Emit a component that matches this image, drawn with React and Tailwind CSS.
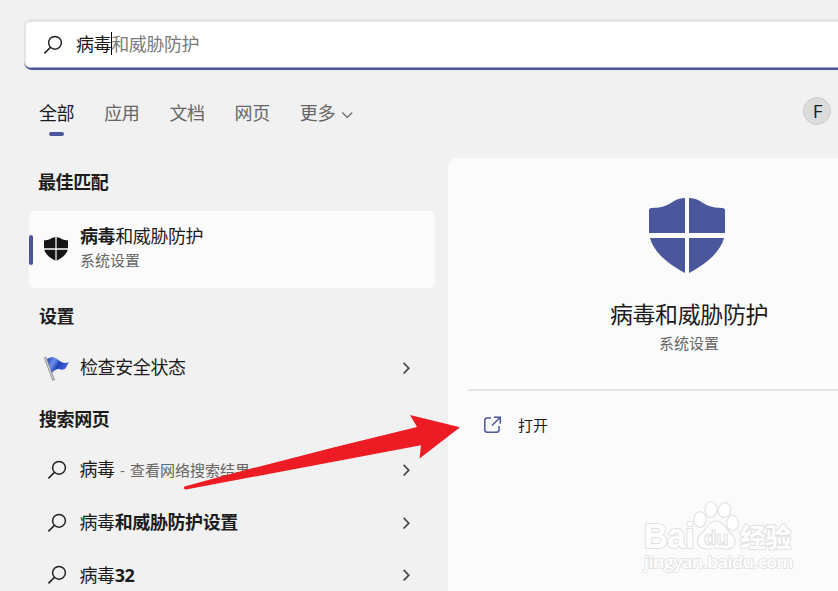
const tabs = ['应用', '文档', '网页'];

const webResults = [
  { query: '病毒', hint: ' - 查看网络搜索结果' },
  { query: '病毒', rest: '和威胁防护设置' },
  { query: '病毒', rest: '32' },
];

function SearchIcon() {
  return (
    <svg className="w-5 h-5 shrink-0" viewBox="0 0 20 20" fill="none" stroke="#222" strokeWidth="1.5">
      <circle cx="12" cy="7.8" r="6.4" />
      <path d="M7.4 12.4L1.4 18.4" />
    </svg>
  );
}

function Chevron() {
  return (
    <svg className="w-3 h-3 shrink-0" viewBox="0 0 12 12" fill="none" stroke="#4a4a4a" strokeWidth="1.7">
      <path d="M3.6 0.9L8.8 6.2L3.6 11.5" />
    </svg>
  );
}

function Shield({ className }) {
  return (
    <svg className={className} viewBox="0 0 76 75" fill="currentColor">
      <path d="M36 0V35H0V12.500Q0 10 2.500 10C14 10 19 7 25 3C28.500 1 32 0 36 0Z" />
      <path d="M40 0V35H76V12.500Q76 10 73.500 10C62 10 57 7 51 3C47.500 1 44 0 40 0Z" />
      <path d="M1 40H36V75C19 66 4.500 54 1 40Z" />
      <path d="M75 40H40V75C57 66 71.500 54 75 40Z" />
    </svg>
  );
}

function FlagIcon() {
  return (
    <svg className="w-[26px] h-[25px] shrink-0" viewBox="0 0 26 25">
      <defs>
        <linearGradient id="flag" x1="0" y1="0" x2="1" y2="0.4">
          <stop offset="0" stopColor="#1d3b9c" />
          <stop offset="0.35" stopColor="#6e92ec" />
          <stop offset="0.6" stopColor="#2342b8" />
          <stop offset="1" stopColor="#4664dc" />
        </linearGradient>
      </defs>
      <path d="M1.500 2.200L9.300 23.300" stroke="#8d8d8d" strokeWidth="2.800" strokeLinecap="round" />
      <path d="M1.500 2.200L9.100 22.800" stroke="#d0d0d0" strokeWidth="1.300" strokeLinecap="round" />
      <path d="M3 3.300C7 .5 10 1 13.500 3.200C17 6.500 20 7.700 25.300 6.300C23.500 8 23 10 21.800 12C19.500 14.500 17.500 13.500 15 13C12 13 10 14.500 7.800 17Z" fill="url(#flag)" />
    </svg>
  );
}

function OpenIcon() {
  return (
    <svg className="w-[18px] h-[18px] shrink-0" viewBox="0 0 18 18" fill="none" stroke="#4b579c" strokeWidth="1.500">
      <path d="M7 2H3.300Q0.800 2 0.800 4.500V13.700Q0.800 16.200 3.300 16.200H12.500Q15 16.200 15 13.700V10" />
      <path d="M9.800 1.200H16.300V7.700M16.300 1.200L8 9.500" />
    </svg>
  );
}

function Watermark() {
  return (
    <svg className="absolute left-[640px] top-[498px] w-[160px] h-[80px]" viewBox="0 0 160 80" fill="#fff" stroke="#e2e2e2" strokeWidth="1.200" strokeLinejoin="round" fontFamily='"Liberation Sans", "Noto Sans CJK SC", sans-serif'>
      <text x="4" y="49.500" fontSize="35" fontWeight="700" textLength="50" lengthAdjust="spacingAndGlyphs" paintOrder="stroke" strokeWidth="2.200">Bai</text>
      <ellipse cx="60" cy="21.500" rx="6" ry="7.800" />
      <ellipse cx="71" cy="11.500" rx="6" ry="8" />
      <ellipse cx="84.500" cy="12" rx="6.300" ry="7.500" transform="rotate(12 84.500 12)" />
      <ellipse cx="92.500" cy="25" rx="6" ry="7.500" />
      <path d="M76 23C83 23 86 30 90 35C98 42 96 51 87 51C82 51 80 50 76 50C72 50 70 51 66 51C56 50 55 41 62 35C67 30 69 23 76 23Z" />
      <text x="64" y="46.500" fontSize="21" fontWeight="700" textLength="24" lengthAdjust="spacingAndGlyphs">du</text>
      <text x="100" y="48.500" fontSize="26" fontWeight="700" textLength="51" lengthAdjust="spacingAndGlyphs" paintOrder="stroke" strokeWidth="2.200">经验</text>
      <text x="4" y="70" fontSize="17" fontWeight="600" textLength="149" lengthAdjust="spacingAndGlyphs" paintOrder="stroke" strokeWidth="1.800" fontFamily='"Open Sans", sans-serif'>jingyan.baidu.com</text>
    </svg>
  );
}

export default function App() {
  return (
    <div className='relative w-[838px] h-[591px] overflow-hidden bg-[#f1f1f1] text-[#1c1c1c] text-[18px] tracking-[-0.4px] whitespace-nowrap font-["Open_Sans","Noto_Sans_CJK_SC",sans-serif]'>
      <div className="pl-[24px] pt-[19px]">
        <div className="w-[840px] h-[51px] rounded-lg bg-[#e4e4e4] pl-[2px] pt-[3px] overflow-hidden border-b-2 border-[#4b579c]">
          <div className="h-[46px] rounded-l-[4px] bg-white border-b border-[#a5aacb] flex items-center pl-[17px]">
            <SearchIcon />
            <div className="flex items-center ml-[13px] leading-6 -mt-0.5">
              <span>病毒</span>
              <span className="w-px h-[23px] bg-black -mr-px" />
              <span className="text-[#7b7b7b]">和威胁防护</span>
            </div>
          </div>
        </div>
      </div>

      <div className="flex justify-between">
        <div className="flex gap-[30px] pl-[39px] pt-[31px] h-[88px] leading-6 text-[#666]">
          <div className="flex flex-col items-center text-[#1c1c1c]">
            全部
            <span className="w-[15px] h-1 mt-[7px] rounded-full bg-[#4b579c]" />
          </div>
          {tabs.map((tab) => (
            <div key={tab}>{tab}</div>
          ))}
          <div className="flex gap-1.5 h-6 items-center">
            更多
            <svg className="w-3 h-3 mt-1" viewBox="0 0 12 12" fill="none" stroke="#666" strokeWidth="1.200">
              <path d="M1.300 3.500L6.300 8.500L11.300 3.500" />
            </svg>
          </div>
        </div>
        <div className="w-7 h-7 mt-[27px] mr-[7px] rounded-full bg-[#dcdcdc] border border-[#cbcbcb] flex items-center justify-center text-[19px] leading-none pl-px">F</div>
      </div>

      <div className="flex">
        <div className="w-[406px] ml-[29px] shrink-0">
          <h2 className="pl-[9px] pt-3 h-[53px] leading-6 font-bold">最佳匹配</h2>
          <div className="h-[77px] rounded-md bg-[#fbfbfb] flex items-center">
            <span className="w-1 h-[30px] rounded-full bg-[#4b579c]" />
            <Shield className="w-6 h-6 ml-[11px] -mt-0.5 text-[#151515]" />
            <div className="ml-3 -mt-[3px]">
              <div className="leading-6"><b>病毒</b>和威胁防护</div>
              <div className="text-[15px] tracking-normal leading-6 text-[#666]">系统设置</div>
            </div>
          </div>
          <h2 className="pl-2.5 pt-4 h-[54px] leading-6 font-bold">设置</h2>
          <div className="h-[52px] flex items-center pl-[15px] pr-[23px]">
            <FlagIcon />
            <span className="ml-2.5 mr-auto leading-6 -mt-[3px]">检查安全状态</span>
            <Chevron />
          </div>
          <h2 className="pl-2.5 pt-[13px] h-[50px] leading-6 font-bold">搜索网页</h2>
          {webResults.map((item, i) => (
            <div key={i} className="h-[52.5px] flex items-center pl-[17.5px] pr-[23px]">
              <SearchIcon />
              <span className="ml-[13px] mr-auto leading-6 -mt-px whitespace-pre">
                {item.query}
                {item.rest && <b>{item.rest}</b>}
                {item.hint && <span className="text-[15px] tracking-normal [word-spacing:1.3px] text-[#666]">{item.hint}</span>}
              </span>
              <Chevron />
            </div>
          ))}
        </div>

        <div className="w-[482px] h-[433px] ml-[13px] shrink-0 rounded-tl-lg bg-[#fbfbfb]">
          <div className="flex flex-col items-center pt-10">
            <Shield className="w-[76px] h-[75px] mr-1 text-[#4b579c]" />
            <div className="mt-[25px] text-[23px] leading-8">病毒和威胁防护</div>
            <div className="mt-px text-[15px] tracking-normal leading-6 text-[#666]">系统设置</div>
          </div>
          <div className="ml-5 mt-[34px] h-0.5 bg-[#e5e5e5]" />
          <div className="flex items-center ml-9 mt-[22px] text-[15px] tracking-normal leading-6">
            <OpenIcon />
            <span className="ml-4">打开</span>
          </div>
        </div>
      </div>

      <svg className="absolute left-0 top-0 w-[838px] h-[591px] pointer-events-none" viewBox="0 0 838 591">
        <path d="M184.500 486.500Q300 455 417 427L410 415L460 427.300L419.500 458.500L421 445.300L186 489.500Q182.500 489 184.500 486.500Z" fill="#ed1c24" />
      </svg>
      <Watermark />
    </div>
  );
}
